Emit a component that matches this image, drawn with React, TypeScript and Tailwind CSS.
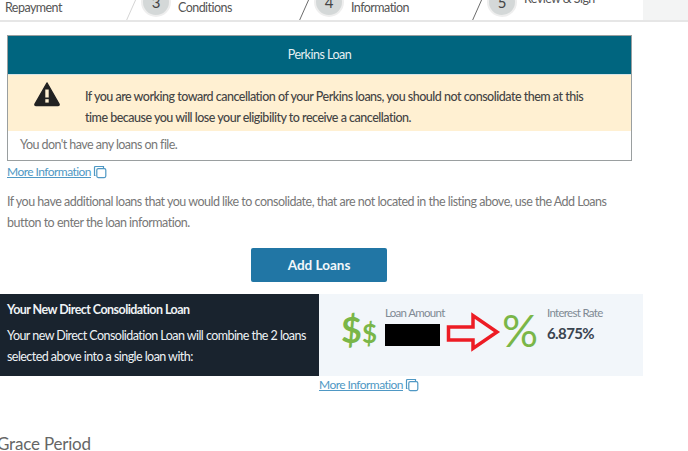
import React from 'react';

const font = "font-['Lato',sans-serif]";

const steps = [
  { n: '3', label: 'Conditions', top: false },
  { n: '4', label: 'Information', top: false },
  { n: '5', label: 'Review & Sign', top: true },
];

const Slash: React.FC<{ light?: boolean }> = ({ light }) => (
  <svg width="14" height="21" viewBox="0 0 14 21" className="shrink-0">
    <path d="M1 27 L13 0" stroke={light ? '#d5d5d5' : '#6b6b6b'} strokeWidth="1" fill="none" />
  </svg>
);

const MoreInfo: React.FC = () => (
  <a className="inline-flex items-center gap-[2px] text-[12px] leading-none tracking-[-0.55px] text-[#4f98c4] underline decoration-1">
    More Information
    <svg width="14" height="14" viewBox="0 0 14 14" fill="none" stroke="#4f98c4" strokeWidth="1.2">
      <path d="M2.5 10.5 H1.5 V2.5 Q1.5 1.5 2.5 1.5 H10.5 V3" />
      <rect x="3.8" y="3.6" width="9" height="9" rx="1.5" />
    </svg>
  </a>
);

export default function App() {
  return (
    <div className={`${font} w-[688px] h-[451px] overflow-hidden bg-white text-[#555]`}>
      {/* Stepper */}
      <div className="flex h-[22px] border-b-2 border-[#e6e6e6] overflow-hidden">
        <div className="flex w-[643px] items-end">
          <span className="w-[123px] shrink-0 pl-[5px] pb-[6px] text-[12.5px] leading-none tracking-[-0.55px] text-[#555]">Repayment</span>
          <Slash light />
          {steps.map((step, i) => (
            <div key={step.n} className="flex w-[173px] shrink-0 items-end">
              <span className="ml-[4px] mb-[3px] flex h-[30px] w-[30px] shrink-0 items-center justify-center rounded-full border-2 border-[#eee] bg-[#d4d8d8] text-[15px] text-[#444]">
                {step.n}
              </span>
              <span className={`ml-[7px] w-[118px] text-[12.5px] leading-none tracking-[-0.55px] ${step.top ? 'pb-[15px]' : 'pb-[6px]'}`}>
                {step.label}
              </span>
              {i < 2 && <Slash />}
            </div>
          ))}
        </div>
        <div className="flex-1 bg-[#f3f4f4]" />
      </div>

      {/* Perkins panel */}
      <div className="ml-[7px] mt-[13px] w-[625px] border border-[#9a9fa0]">
        <div className="flex h-[39px] items-center justify-center border-b border-[#d5e3e6] bg-[#00657f] text-[12.5px] tracking-[-0.5px] text-[#e6f0f3]">
          Perkins Loan
        </div>
        <div className="flex h-[56px] items-start bg-[#fff0d2]">
          <svg width="28" height="26" viewBox="0 0 28 26" className="ml-[25px] mt-[6px] shrink-0">
            <path d="M14 2 L26 23 Q26.500 24.500 25 24.500 H3 Q1.500 24.500 2 23 Z" fill="#222" stroke="#222" strokeWidth="1.500" strokeLinejoin="round" />
            <rect x="12.300" y="8.500" width="3.400" height="8" fill="#fff0d2" />
            <rect x="12.300" y="18.200" width="3.400" height="3.400" fill="#fff0d2" />
          </svg>
          <p className="ml-[24px] mt-[11px] w-[520px] text-[12.5px] font-medium leading-[21px] tracking-[-0.5px] text-[#444]">
            If you are working toward cancellation of your Perkins loans, you should not consolidate them at this
            <br />
            time because you will lose your eligibility to receive a cancellation.
          </p>
        </div>
        <div className="flex h-[29px] items-center pl-[12px] text-[12.5px] tracking-[-0.55px] text-[#777]">You don't have any loans on file.</div>
      </div>

      <div className="ml-[7px] mt-[4px] flex h-[14px] items-center">
        <MoreInfo />
      </div>

      <p className="ml-[7px] mt-[12px] w-[620px] text-[12.5px] leading-[21px] tracking-[-0.5px] text-[#777]">
        If you have additional loans that you would like to consolidate, that are not located in the listing above, use the Add Loans
        <br />
        button to enter the loan information.
      </p>

      <div className="mt-[15px] ml-[251px]">
        <button className="h-[34px] w-[136px] rounded-[2px] bg-[#2176a5] text-[13.5px] font-bold text-[#f2f7fa]">Add Loans</button>
      </div>

      {/* New consolidation loan */}
      <div className="mt-[12px] flex h-[82px] w-[643px]">
        <div className="w-[319px] shrink-0 bg-[#19232e] pl-[7px] pt-[7px] text-[12.5px] tracking-[-0.55px] text-[#eef2f5]">
          <div className="font-bold leading-[18px]">Your New Direct Consolidation Loan</div>
          <div className="mt-[6px] leading-[21px]">
            Your new Direct Consolidation Loan will combine the 2 loans
            <br />
            selected above into a single loan with:
          </div>
        </div>
        <div className="relative flex flex-1 items-start bg-[#f2f6fa]">
          <div className="ml-[22px] mt-[17px] flex w-[44px] items-baseline font-bold leading-none text-[#7ab648]">
            <span className="text-[36px]">$</span>
            <span className="text-[26px]">$</span>
          </div>
          <div className="mt-[12px]">
            <div className="text-[11.5px] leading-[14px] tracking-[-0.7px] text-[#808a94]">Loan Amount</div>
            <div className="mt-[4px] h-[22px] w-[55px] bg-black" />
          </div>
          <svg width="56" height="40" viewBox="0 0 56 40" className="absolute left-[127px] top-[18px]">
            <path d="M2.500 15 H27 V3.500 L51 20 L27 36.500 V28 H2.500 Z" fill="#f2f6fa" stroke="#ed1c24" strokeWidth="3.500" />
          </svg>
          <span className="absolute left-[183px] top-[10px] text-[45px] leading-[52px] text-[#7ab648]">%</span>
          <div className="absolute left-[228px] top-[12px]">
            <div className="text-[11.5px] leading-[14px] tracking-[-0.7px] text-[#808a94]">Interest Rate</div>
            <div className="mt-[3px] text-[15px] font-bold leading-[20px] tracking-[-0.6px] text-[#3a4450]">6.875%</div>
          </div>
        </div>
      </div>

      <div className="ml-[319px] mt-[2px] flex h-[14px] items-center">
        <MoreInfo />
      </div>

      <h2 className="-ml-[3px] mt-[40px] text-[17px] font-normal leading-[24px] tracking-[-0.2px] text-[#666]">Grace Period</h2>
    </div>
  );
}
